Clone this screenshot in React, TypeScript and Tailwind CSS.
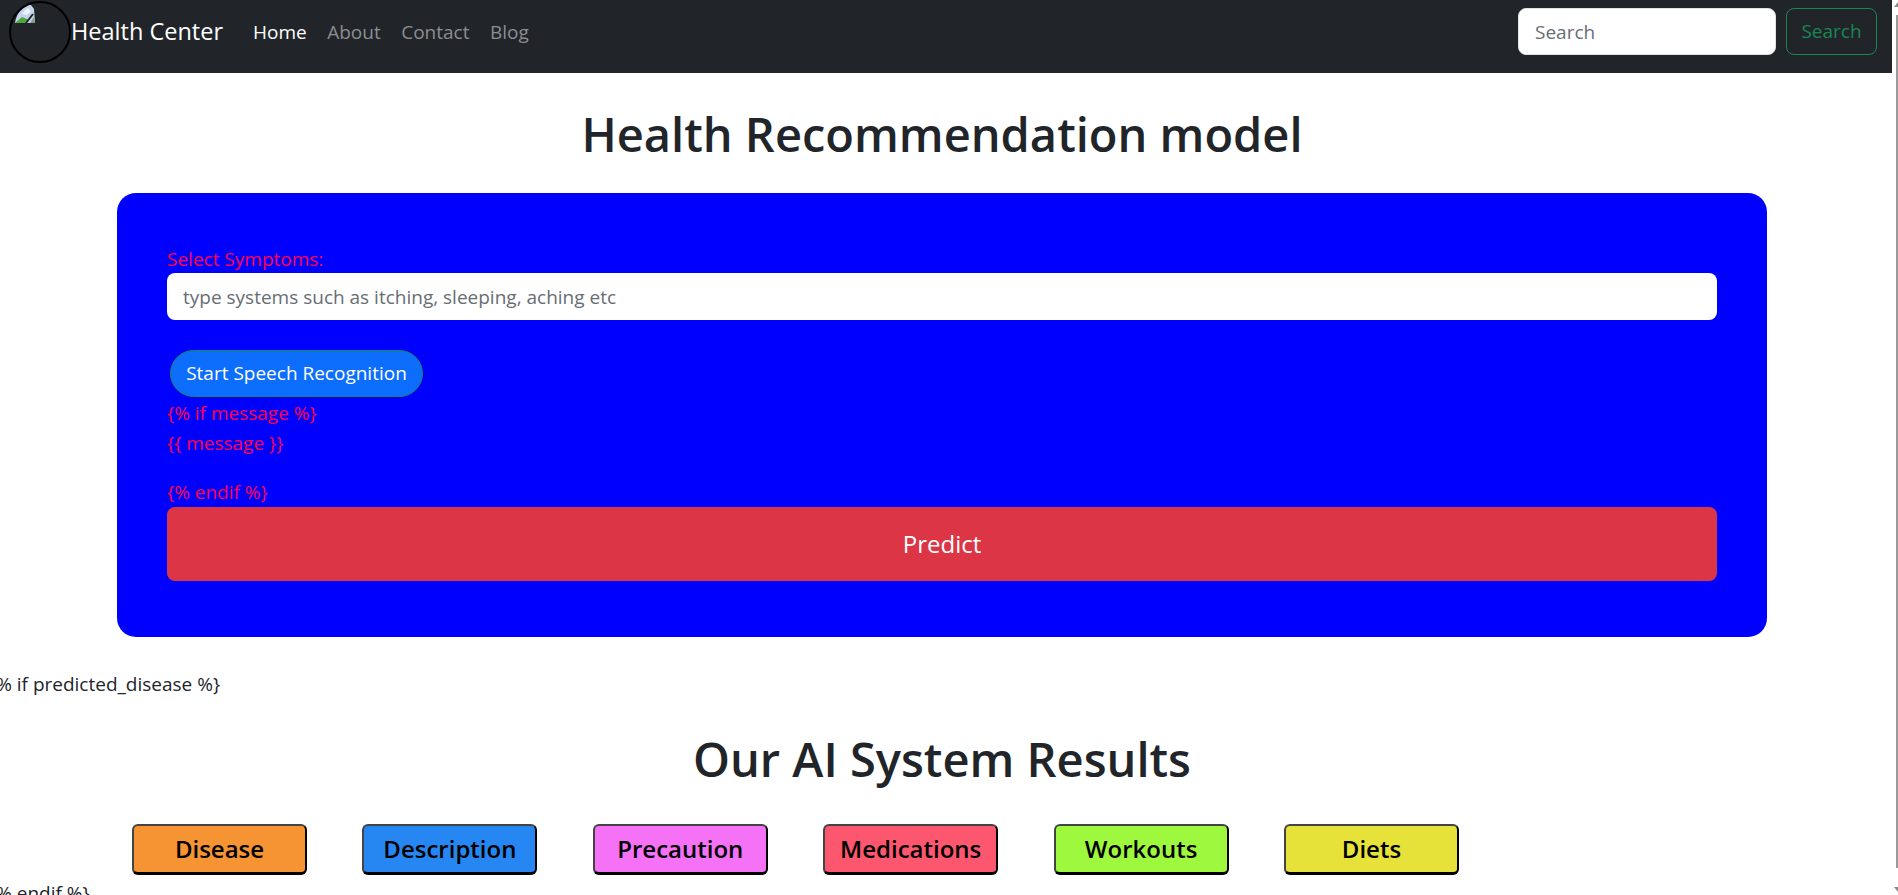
import React from 'react';

const font = { fontFamily: '"Open Sans", sans-serif' };

const tabs = [
  { label: 'Disease', color: 'bg-[#f69333]' },
  { label: 'Description', color: 'bg-[#2686f2]' },
  { label: 'Precaution', color: 'bg-[#f571f5]' },
  { label: 'Medications', color: 'bg-[#fd566f]' },
  { label: 'Workouts', color: 'bg-[#9ef93e]' },
  { label: 'Diets', color: 'bg-[#e6e23a]' },
];

const BrokenImage = () => (
  <svg width="22" height="19" viewBox="0 0 22 19" className="absolute left-[2px] top-[2px]">
    <path d="M2 18C3 10 8 3 14 0h4l3 4 1 14z" fill="#c4d4ec" />
    <path d="M9 9c2-3 4-5 6-6l3 3-4 4z" fill="#eef3fb" />
    <path d="M2 18l7-6 7 3-3 3z" fill="#4fa83d" />
    <path d="M17 18l4-6 1 6z" fill="#8a9a80" />
    <path d="M13 18l7-9" stroke="#212529" strokeWidth="2" fill="none" />
  </svg>
);

const App: React.FC = () => {
  return (
    <div className="flex h-[895px] overflow-hidden bg-white text-[#212529]" style={font}>
      <div className="w-[1892px] shrink-0">
        <nav className="flex h-[73px] items-center bg-[#212529] pb-[10px] pl-[9px] pr-[15px]">
          <div className="relative h-[62px] w-[62px] shrink-0 overflow-hidden rounded-full border-2 border-black">
            <BrokenImage />
          </div>
          <a className="mt-[1px] text-[23.5px] text-white">Health Center</a>
          <ul className="ml-[30px] mt-[1px] flex gap-[20.5px] text-[19px]">
            <li className="text-white">Home</li>
            <li className="text-[#8c8e91]">About</li>
            <li className="text-[#8c8e91]">Contact</li>
            <li className="text-[#8c8e91]">Blog</li>
          </ul>
          <div className="ml-auto flex gap-[10px]">
            <input
              placeholder="Search"
              className="h-[47px] w-[258px] rounded-[8px] border border-[#dee2e6] bg-white px-[16px] text-[19px] placeholder:text-[#686d73]"
            />
            <button className="h-[47px] w-[91px] rounded-[8px] border border-[#198754] text-[19px] text-[#198754]">Search</button>
          </div>
        </nav>

        <h1 className="mt-[31px] w-[1884px] text-center text-[47px] font-semibold leading-[60px]">Health Recommendation model</h1>

        <div className="ml-[117px] mt-[29px] h-[444px] w-[1650px] rounded-[19px] bg-[#0000ff] px-[50px] pt-[54px] text-[19px] text-[#ff0044]">
          <label className="mb-[2px] block leading-[24px]">Select Symptoms:</label>
          <input
            placeholder="type systems such as itching, sleeping, aching etc"
            className="block h-[47px] w-full rounded-[8px] bg-white px-[16px] text-[19px] placeholder:text-[#686d73]"
          />
          <button className="ml-[3px] mt-[30px] block h-[47px] w-[253px] rounded-full border border-[#198754] bg-[#0d6efd] text-[19px] text-white">
            Start Speech Recognition
          </button>
          <p className="mt-[1px] leading-[30px]">{'{% if message %}'}</p>
          <p className="leading-[30px]">{'{{ message }}'}</p>
          <p className="mt-[19px] leading-[30px]">{'{% endif %}'}</p>
          <button className="block h-[74px] w-full rounded-[8px] bg-[#dc3545] text-[24px] text-white">Predict</button>
        </div>

        <p className="-ml-[11px] mt-[32px] text-[19px] leading-[30px]">{'{% if predicted_disease %}'}</p>

        <h2 className="mt-[30px] w-[1884px] text-center text-[47px] font-semibold leading-[60px]">Our AI System Results</h2>

        <div className="ml-[132px] mt-[35px] flex gap-[55.4px]">
          {tabs.map(t => (
            <button
              key={t.label}
              className={`h-[51px] w-[175px] rounded-[6px] border-2 border-b-[3px] border-[#444] border-b-black border-r-black ${t.color} text-[24px] font-semibold text-black`}
            >
              {t.label}
            </button>
          ))}
        </div>

        <p className="-ml-[11px] mt-[3px] text-[19px] leading-[30px]">{'{% endif %}'}</p>
      </div>

      {/* scrollbar, mostly off the right edge in the screenshot */}
      <div className="flex flex-1 flex-col items-end bg-white pt-[2px]">
        <svg width="4" height="5" viewBox="0 0 4 5" className="mb-[8px]"><path d="M4 0v5H0z" fill="#8a8a8a" /></svg>
        <div className="h-[853px] w-[2px] bg-[#9a9a9a]" />
        <svg width="4" height="5" viewBox="0 0 4 5" className="mt-[19px]"><path d="M4 5V0H0z" fill="#8a8a8a" /></svg>
      </div>
    </div>
  );
};

export default App;
